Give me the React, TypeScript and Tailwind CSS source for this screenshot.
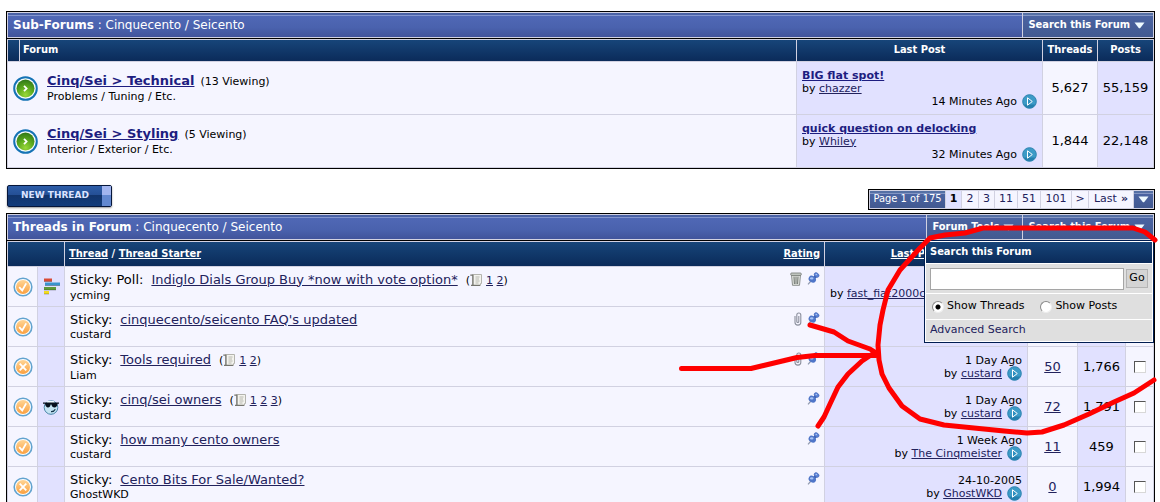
import * as React from "react";

interface Forum {
    name: string;
    viewing: number;
    description: string;
    lastTitle: string;
    lastUser: string;
    lastTime: string;
    threads: string;
    posts: string;
}

interface Thread {
    title: string;
    poll?: boolean;
    cool?: boolean;
    checked: boolean;
    pages?: number[];
    starter: string;
    mark?: "trash" | "clip";
    date?: string;
    lastUser?: string;
    replies?: string;
    views?: string;
}

const forums: Forum[] = [
    { name: "Cinq/Sei > Technical", viewing: 13, description: "Problems / Tuning / Etc.", lastTitle: "BIG flat spot!", lastUser: "chazzer", lastTime: "14 Minutes Ago", threads: "5,627", posts: "55,159" },
    { name: "Cinq/Sei > Styling", viewing: 5, description: "Interior / Exterior / Etc.", lastTitle: "quick question on delocking", lastUser: "Whiley", lastTime: "32 Minutes Ago", threads: "1,844", posts: "22,148" },
];

const threads: Thread[] = [
    { title: "Indiglo Dials Group Buy *now with vote option*", poll: true, checked: true, pages: [1, 2], starter: "ycming", mark: "trash", lastUser: "fast_fiat2000c" },
    { title: "cinquecento/seicento FAQ's updated", checked: true, starter: "custard", mark: "clip" },
    { title: "Tools required", checked: false, pages: [1, 2], starter: "Liam", mark: "clip", date: "1 Day Ago", lastUser: "custard", replies: "50", views: "1,766" },
    { title: "cinq/sei owners", cool: true, checked: true, pages: [1, 2, 3], starter: "custard", date: "1 Day Ago", lastUser: "custard", replies: "72", views: "1,791" },
    { title: "how many cento owners", checked: true, starter: "custard", date: "1 Week Ago", lastUser: "The Cinqmeister", replies: "11", views: "459" },
    { title: "Cento Bits For Sale/Wanted?", checked: false, starter: "GhostWKD", date: "24-10-2005", lastUser: "GhostWKD", replies: "0", views: "1,994" },
];

const barStyle = "bg-[linear-gradient(#4a62a6_0,#4a62a6_2px,#8496cf_2px,#8496cf_3px,#5068b5_3px,#4a62ae_60%,#41549b)]";
const toolStyle = "bg-[linear-gradient(#5570a5_0,#5570a5_2px,#8496c4_2px,#8496c4_3px,#4b64a2_3px,#425990)]";
const headStyle = "bg-[linear-gradient(#174579,#0b2b5a)]";
const condensed = "font-['DejaVu_Sans_Condensed','DejaVu_Sans',sans-serif]";

const DownArrow: React.FC = () => (
    <svg width="11" height="7" viewBox="0 0 11 7" className="shrink-0" aria-hidden="true">
        <path d="M0.5 0.5h10L6.5 5.8q-1 1-2 0z" fill="#eefaff" />
    </svg>
);

const ForumIcon: React.FC = () => (
    <svg width="25" height="25" viewBox="0 0 25 25" className="shrink-0" aria-hidden="true">
        <defs>
            <radialGradient id="forumGreen" cx="50%" cy="85%" r="80%">
                <stop offset="0" stopColor="#9ad83a" />
                <stop offset="0.55" stopColor="#5aa81c" />
                <stop offset="1" stopColor="#357d18" />
            </radialGradient>
        </defs>
        <circle cx="12.5" cy="12.5" r="11.3" fill="#f7fbff" stroke="#1573b5" strokeWidth="2" />
        <circle cx="12.5" cy="12.5" r="9" fill="url(#forumGreen)" />
        <path d="M11 9.8l2.6 2.7-2.6 2.7" fill="none" stroke="#fff" strokeWidth="1.8" />
    </svg>
);

const StatusIcon: React.FC<{ checked: boolean }> = ({ checked }) => (
    <svg width="20" height="20" viewBox="0 0 20 20" className="mx-auto block" aria-hidden="true">
        <defs>
            <linearGradient id="statusOrange" x1="0" y1="0" x2="0" y2="1">
                <stop offset="0" stopColor="#ffd595" />
                <stop offset="1" stopColor="#fba040" />
            </linearGradient>
        </defs>
        <circle cx="10" cy="10" r="8.8" fill="#fff" stroke="#62a3cf" strokeWidth="1.6" />
        <circle cx="10" cy="10" r="7" fill="url(#statusOrange)" />
        {checked
            ? <path d="M6.2 10.2l3 3.2 4-7" fill="none" stroke="#fff" strokeWidth="1.8" />
            : <path d="M6.7 6.7l6.6 6.6M13.3 6.7l-6.6 6.6" fill="none" stroke="#fff" strokeWidth="1.8" />}
    </svg>
);

const PollIcon: React.FC = () => (
    <svg width="17" height="17" viewBox="0 0 17 17" className="mx-auto block" aria-hidden="true">
        <path d="M1 0.5h8v3H1z" fill="#d94a35" />
        <path d="M2 4.5h15v3H2z" fill="#3a94cf" />
        <path d="M1 9h12v3H1z" fill="#5f9a38" />
        <path d="M1 13h5v3H1z" fill="#f2dc20" />
        <path d="M1 3.5h8M2 7.5h15M1 12h12M1 16h5" stroke="#00000040" strokeWidth="1" />
    </svg>
);

const CoolIcon: React.FC = () => (
    <svg width="16" height="16" viewBox="0 0 16 16" className="mx-auto block" aria-hidden="true">
        <circle cx="8" cy="8.5" r="6.8" fill="#c4e4f3" stroke="#4a86a8" />
        <ellipse cx="7.5" cy="3" rx="4" ry="1.3" fill="#effaff" />
        <path d="M0 3.5h16v1.2h-1.500q-.5 3.800-3 3.800T8.400 5.600h-.8Q7.200 8.500 5 8.500T2 4.700H0z" fill="#07111c" />
        <path d="M8 12.600q3 .2 4.300-2.400" fill="none" stroke="#16364c" strokeWidth="1.200" />
    </svg>
);

const GoIcon: React.FC = () => (
    <svg width="15" height="15" viewBox="0 0 15 15" className="shrink-0" aria-hidden="true">
        <circle cx="7.5" cy="7.5" r="6.8" fill="#3c9bc7" stroke="#2c83af" />
        <path d="M2 10.500a6 6 0 0 0 11 0" fill="#2480ae" />
        <path d="M5.500 3.800v7.400l4.800-3.700z" fill="#2f90c0" stroke="#fff" strokeWidth="1" />
    </svg>
);

const PinIcon: React.FC = () => (
    <svg width="13" height="13" viewBox="0 0 13 13" className="shrink-0" aria-hidden="true">
        <path d="M1 12.300L4 9" stroke="#8f98ae" strokeWidth="1.200" />
        <path d="M6 7l3.500-3.500" stroke="#3f62b4" strokeWidth="3" />
        <ellipse cx="5.300" cy="7.200" rx="3.900" ry="3.100" transform="rotate(35 5.300 7.200)" fill="#4f76c8" />
        <ellipse cx="9.600" cy="3" rx="2.700" ry="2" transform="rotate(40 9.600 3)" fill="#5c83d6" stroke="#3a5cb0" strokeWidth=".5" />
        <ellipse cx="4.700" cy="6.400" rx="1.800" ry="1.100" fill="#a9c4f6" />
        <circle cx="9.300" cy="2.500" r=".8" fill="#a9c4f6" />
    </svg>
);

const TrashIcon: React.FC = () => (
    <svg width="12" height="14" viewBox="0 0 12 14" className="shrink-0" aria-hidden="true">
        <path d="M1.500 3l1 10.300h7L10.500 3z" fill="#e4e6e2" stroke="#737873" strokeWidth=".8" />
        <rect x=".7" y="1" width="10.600" height="2.400" rx="1" fill="#c9cdc8" stroke="#6f746f" strokeWidth=".8" />
        <path d="M4 4.500l.4 7.500M6 4.500V12M8 4.500l-.4 7.500" stroke="#5e645e" strokeWidth=".9" />
    </svg>
);

const ClipIcon: React.FC = () => (
    <svg width="8" height="14" viewBox="0 0 8 14" className="shrink-0" aria-hidden="true">
        <path d="M1 4v6.500a2.800 2.500 0 0 0 5.800 0V3a2 2 0 0 0-4 0v6.500a1 1 0 0 0 2 0V4" fill="none" stroke="#8b8f9d" strokeWidth="1.100" />
    </svg>
);

const PagesIcon: React.FC = () => (
    <svg width="12" height="12" viewBox="0 0 12 12" className="mr-1 inline-block align-[-2px]" aria-hidden="true">
        <path d="M2.500 .5h9v9h-1v2h-8z" fill="#f3f3ee" stroke="#b4b4ae" />
        <path d="M.3 1.200h3M3 1v10.500M1 11.300h9" fill="none" stroke="#74746e" strokeWidth="1.200" />
        <path d="M5.500 3h4M5.500 5h3.500M5.500 7h4M5.500 9h3" stroke="#a7a7a0" strokeWidth=".8" />
    </svg>
);

const TextLink: React.FC<{ children: React.ReactNode; bold?: boolean }> = ({ children, bold }) => (
    <a href="#" className={bold ? "font-bold text-[#1d1d80] underline" : "text-[#22225c] underline"}>{children}</a>
);

const TitleBar: React.FC<{ label: string; children: React.ReactNode }> = ({ label, children }) => (
    <div className="flex h-[26px] gap-px bg-[#d1d1e1] p-px">
        <h2 className={`flex grow items-center pl-[5px] text-[12px] text-white ${barStyle}`}>
            <span><b>{label}</b> : Cinquecento / Seicento</span>
        </h2>
        {children}
    </div>
);

const ToolButton: React.FC<{ label: string }> = ({ label }) => (
    <button className={`flex h-full items-center gap-1 pr-2 pl-[5px] text-[11px] font-bold whitespace-nowrap text-white ${condensed} ${toolStyle}`}>
        {label}
        <DownArrow />
    </button>
);

const SubForums: React.FC = () => (
    <section className="border border-black">
        <TitleBar label="Sub-Forums">
            <ToolButton label="Search this Forum" />
        </TitleBar>
        <table className="w-full table-fixed border-separate border-spacing-px border-t border-black bg-[#d1d1e1]">
            <colgroup>
                <col className="w-[11px]" />
                <col />
                <col className="w-[245px]" />
                <col className="w-[54px]" />
                <col className="w-[55px]" />
            </colgroup>
            <thead>
                <tr className={`h-[21px] text-[11px] text-white ${condensed}`}>
                    <th className={`p-0 ${headStyle}`}></th>
                    <th className={`p-0 pl-[3px] text-left ${headStyle}`}>Forum</th>
                    <th className={`p-0 ${headStyle}`}>Last Post</th>
                    <th className={`p-0 ${headStyle}`}>Threads</th>
                    <th className={`p-0 ${headStyle}`}>Posts</th>
                </tr>
            </thead>
            <tbody>
                {forums.map((forum) => (
                    <tr key={forum.name} className="h-[52px]">
                        <td colSpan={2} className="bg-[#f5f5ff] p-0 pl-[5px]">
                            <div className="flex items-center gap-[9px]">
                                <ForumIcon />
                                <div className="text-[11px] leading-[14px]">
                                    <div className="flex items-baseline gap-[6px] leading-4">
                                        <span className="text-[13px]"><TextLink bold>{forum.name}</TextLink></span>
                                        <span>({forum.viewing} Viewing)</span>
                                    </div>
                                    <div>{forum.description}</div>
                                </div>
                            </div>
                        </td>
                        <td className="bg-[#e1e1ff] p-0 pr-[5px] pl-[5px] text-[11px] leading-[13px]">
                            <TextLink bold>{forum.lastTitle}</TextLink>
                            <div>by <TextLink>{forum.lastUser}</TextLink></div>
                            <div className="flex h-[13px] items-center justify-end gap-[5px]">
                                {forum.lastTime}
                                <GoIcon />
                            </div>
                        </td>
                        <td className="bg-[#f5f5ff] p-0 text-center text-[13px]">{forum.threads}</td>
                        <td className="bg-[#e1e1ff] p-0 text-center text-[13px]">{forum.posts}</td>
                    </tr>
                ))}
            </tbody>
        </table>
    </section>
);

const PageNav: React.FC = () => (
    <nav className="flex h-[21px] gap-px border border-black bg-[#d1d1e1] p-px text-[11px] text-[#22225c]">
        <span className={`flex w-[75px] items-center justify-center whitespace-nowrap text-white ${condensed} ${toolStyle}`}>Page 1 of 175</span>
        <b className="flex w-[15px] items-center justify-center bg-[#e1e1ff] text-black">1</b>
        <a href="#" className="flex w-4 items-center justify-center bg-[#f5f5ff]">2</a>
        <a href="#" className="flex w-[15px] items-center justify-center bg-[#f5f5ff]">3</a>
        <a href="#" className="flex w-[22px] items-center justify-center bg-[#f5f5ff]">11</a>
        <a href="#" className="flex w-[22px] items-center justify-center bg-[#f5f5ff]">51</a>
        <a href="#" className="flex w-[30px] items-center justify-center bg-[#f5f5ff]">101</a>
        <a href="#" className="flex w-4 items-center justify-center bg-[#f5f5ff]">&gt;</a>
        <a href="#" className="flex w-11 items-center justify-center gap-1 bg-[#f5f5ff]">Last <b>»</b></a>
        <button aria-label="Go to page" className={`flex w-[19px] items-center justify-center ${toolStyle}`}>
            <DownArrow />
        </button>
    </nav>
);

const SearchMenu: React.FC = () => (
    <form className="absolute top-full right-0 z-10 flex w-[230px] flex-col gap-px border border-[#001d50] bg-white p-px text-[11px]">
        <h3 className={`flex h-[21px] items-center pl-1 text-[11px] font-bold text-white ${condensed} ${headStyle}`}>Search this Forum</h3>
        <div className="flex h-[29px] items-center gap-0.5 bg-[#dfdfdf] px-1">
            <input type="text" aria-label="Search terms" className="h-[22px] min-w-0 grow border border-[#a5a5a5] bg-white px-1" />
            <button type="button" className="h-[19px] w-[22px] border border-[#b4b4b4] bg-[#d4d4d4]">Go</button>
        </div>
        <div className="flex h-[25px] items-center gap-4 bg-[#dfdfdf] pl-[6px]">
            {["Show Threads", "Show Posts"].map((label, i) => (
                <label key={label} className="flex items-center gap-[3px]">
                    <input
                        type="radio"
                        name="show"
                        defaultChecked={i === 0}
                        className="size-3 appearance-none rounded-full border border-[#8a8a8a] border-r-[#eeeeee] border-b-[#eeeeee] bg-white checked:bg-[radial-gradient(#000_0,#000_2px,#fff_3px)]"
                    />
                    {label}
                </label>
            ))}
        </div>
        <div className="flex h-[21px] items-center bg-[#dfdfdf] pl-1">
            <a href="#" className="text-[#22225c]">Advanced Search</a>
        </div>
    </form>
);

const ThreadRow: React.FC<{ thread: Thread }> = ({ thread }) => (
    <tr className="h-[39px]">
        <td className="bg-[#f5f5ff] p-0"><StatusIcon checked={thread.checked} /></td>
        <td className="bg-[#e1e1ff] p-0">
            {thread.poll && <PollIcon />}
            {thread.cool && <CoolIcon />}
        </td>
        <td className="bg-[#f5f5ff] p-0 pr-1 pl-[5px]">
            <div className="flex justify-between">
                <div className="text-[11px] leading-[13px]">
                    <div className="flex items-baseline gap-2 leading-4">
                        <span className="text-[13px]">Sticky:{thread.poll && " Poll:"}</span>
                        <span className="text-[13px]"><TextLink>{thread.title}</TextLink></span>
                        {thread.pages && (
                            <span>
                                (<PagesIcon />
                                {thread.pages.map((page, i) => (
                                    <React.Fragment key={page}>{i > 0 && " "}<TextLink>{page}</TextLink></React.Fragment>
                                ))})
                            </span>
                        )}
                    </div>
                    <div>{thread.starter}</div>
                </div>
                <div className="flex items-start gap-[5px]">
                    {thread.mark === "trash" && <TrashIcon />}
                    {thread.mark === "clip" && <ClipIcon />}
                    <PinIcon />
                </div>
            </div>
        </td>
        <td className="bg-[#e1e1ff] p-0 px-[5px] text-right text-[11px] leading-[13px]">
            <div className="h-[13px]">{thread.date}</div>
            {thread.lastUser && (
                <div className={`flex h-[13px] items-center gap-[5px] ${thread.date ? "justify-end" : ""}`}>
                    <span>by <TextLink>{thread.lastUser}</TextLink></span>
                    {thread.date && <GoIcon />}
                </div>
            )}
        </td>
        <td className="bg-[#f5f5ff] p-0 text-center text-[13px]">{thread.replies && <TextLink>{thread.replies}</TextLink>}</td>
        <td className="bg-[#e1e1ff] p-0 text-center text-[13px]">{thread.views}</td>
        <td className="bg-[#f5f5ff] p-0">
            <input
                type="checkbox"
                aria-label={`Select ${thread.title}`}
                className="mx-auto block size-3 appearance-none border border-t-[#555555] border-r-[#d8d8d8] border-b-[#d8d8d8] border-l-[#555555] bg-white"
            />
        </td>
    </tr>
);

const ThreadList: React.FC = () => (
    <section className="border border-black">
        <div className="relative">
            <TitleBar label="Threads in Forum">
                <ToolButton label="Forum Tools" />
                <ToolButton label="Search this Forum" />
            </TitleBar>
            <SearchMenu />
        </div>
        <table className="w-full table-fixed border-separate border-spacing-px border-t border-black bg-[#d1d1e1]">
            <colgroup>
                <col className="w-[29px]" />
                <col className="w-[26px]" />
                <col />
                <col className="w-[202px]" />
                <col className="w-[49px]" />
                <col className="w-[47px]" />
                <col className="w-[27px]" />
            </colgroup>
            <thead>
                <tr className={`h-6 text-[11px] text-white ${condensed}`}>
                    <th colSpan={2} className={`p-0 ${headStyle}`}></th>
                    <th className={`p-0 pr-1 pl-1 ${headStyle}`}>
                        <div className="flex justify-between">
                            <span><a href="#" className="underline">Thread</a> / <a href="#" className="underline">Thread Starter</a></span>
                            <a href="#" className="underline">Rating</a>
                        </div>
                    </th>
                    <th className={`p-0 ${headStyle}`}>
                        <div className="flex items-center justify-center gap-2">
                            <a href="#" className="underline">Last Post</a>
                            <DownArrow />
                        </div>
                    </th>
                    <th className={`p-0 ${headStyle}`}></th>
                    <th className={`p-0 ${headStyle}`}></th>
                    <th className={`p-0 ${headStyle}`}></th>
                </tr>
            </thead>
            <tbody>
                {threads.map((thread) => <ThreadRow key={thread.title} thread={thread} />)}
            </tbody>
        </table>
    </section>
);

/* Freehand circle and arrow drawn over the search menu */
const RedMarker: React.FC = () => (
    <svg width="485" height="220" viewBox="675 220 485 220" className="pointer-events-none absolute top-[220px] right-0 z-20" aria-hidden="true">
        <g fill="none" stroke="#ff0000" strokeWidth="5" strokeLinecap="round" strokeLinejoin="round">
            <path d="M1155 240l-10-8-12-4H983l-18 5-20 2-15 3-10 10-20 22-12 20-5 20-3 15-2 20 1 15 3 14 7 14 13 18 18 13 24 6 30 3 30 3 23 2 15-1 22-7 25-11 25-12 20-9 20-13" />
            <path d="M681.500 368.500H751l21-5 25-6 18-2h61" />
            <path d="M810 325l24 7 14 9 22 8 8 5" />
            <path d="M818 426l6-9 6-13 8-17 10-13 14-13 12-8" />
        </g>
    </svg>
);

const App: React.FC = () => (
    <div className="relative h-screen overflow-hidden bg-white pt-[11px] pr-[5px] pl-[6px] font-['DejaVu_Sans',sans-serif] text-black">
        <SubForums />
        <div className="mt-4 mb-[3px] flex items-end justify-between">
            <button className="mb-[3px] ml-px flex h-[22px] w-[105px] rounded-xs border border-[#06163a] bg-[linear-gradient(#2d5da8_0,#244f95_45%,#11346c_46%,#123c7c)] shadow-[0_1px_2px_#00000066]">
                <span className="flex h-full grow items-center justify-center text-[9px] font-bold text-[#dbe3ff]">NEW THREAD</span>
                <span className="h-full w-[9px] bg-[linear-gradient(#a2b5ef_45%,#6288d0_46%)]"></span>
            </button>
            <PageNav />
        </div>
        <ThreadList />
        <RedMarker />
    </div>
);

export default App;
